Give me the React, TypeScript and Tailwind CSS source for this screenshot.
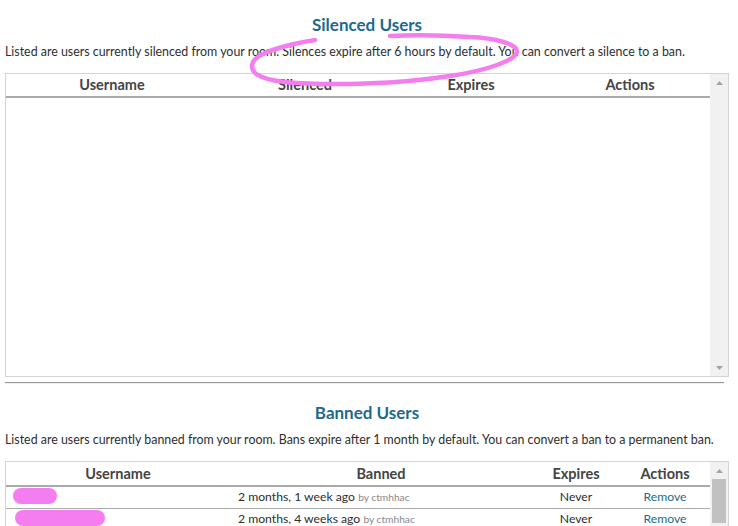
import React from "react";

const font = { fontFamily: 'Lato, "Noto Sans", sans-serif' };

function Scrollbar({ thumb }: { thumb?: boolean }) {
  return (
    <div className="relative flex w-[18px] shrink-0 flex-col bg-[#f1f1f1]">
      <div className="flex h-[17px] shrink-0 items-center justify-center">
        <svg width="7" height="4" viewBox="0 0 7 4"><path d="M0 4 L3.5 0 L7 4Z" fill="#a3a3a3" /></svg>
      </div>
      <div className="flex-1 px-[2px]">
        {thumb && <div className="h-full bg-[#c1c1c1]" />}
      </div>
      <div className="flex h-[17px] shrink-0 items-center justify-center">
        <svg width="7" height="4" viewBox="0 0 7 4"><path d="M0 0 L3.5 4 L7 0Z" fill="#a3a3a3" /></svg>
      </div>
    </div>
  );
}

export default function App() {
  return (
    <div className="relative h-[526px] w-[738px] overflow-hidden bg-white text-[#2e2e2e]" style={font}>
      <div className="pl-[5px] pr-[9px]">
        <h2 className="pt-[13px] text-center text-[17px] font-bold leading-[24px] text-[#1d6a8c]">Silenced Users</h2>
        <p className="mt-[6px] whitespace-nowrap text-[12.4px] leading-[18px]">
          Listed are users currently silenced from your room. Silences expire after 6 hours by default. You can convert a silence to a ban.
        </p>
        <div className="mt-[12px] flex h-[304px] border border-[#d4d4d4]">
          <div className="flex flex-1 flex-col">
            <div className="flex h-[24px] items-center border-b-2 border-[#aaa] text-[14.5px] font-bold text-[#444]">
              <div className="w-[212px] text-center">Username</div>
              <div className="w-[174px] text-center">Silenced</div>
              <div className="w-[158px] text-center">Expires</div>
              <div className="flex-1 text-center">Actions</div>
            </div>
          </div>
          <Scrollbar />
        </div>
        <div className="mt-[5px] mr-[5px] h-[2px] border-t border-[#999] bg-[#eee]" />
        <h2 className="mt-[17px] text-center text-[17px] font-bold leading-[24px] text-[#1d6a8c]">Banned Users</h2>
        <p className="mt-[6px] whitespace-nowrap text-[12.4px] leading-[18px]">
          Listed are users currently banned from your room. Bans expire after 1 month by default. You can convert a ban to a permanent ban.
        </p>
        <div className="mt-[12px] flex h-[80px] border border-[#d4d4d4]">
          <div className="flex flex-1 flex-col">
            <div className="flex h-[25px] shrink-0 items-center border-b-2 border-[#aaa] text-[14.5px] font-bold text-[#444]">
              <div className="w-[224px] text-center">Username</div>
              <div className="w-[302px] text-center">Banned</div>
              <div className="w-[88px] text-center">Expires</div>
              <div className="flex-1 text-center">Actions</div>
            </div>
            {[
              "2 months, 1 week ago",
              "2 months, 4 weeks ago",
            ].map((t, i) => (
              <div key={i} className="flex h-[22px] shrink-0 items-center border-b border-[#aaa] text-[12.2px]">
                <div className="w-[224px]"></div>
                <div className="w-[302px] whitespace-nowrap pl-[8px]">
                  {t} <span className="text-[10.2px] text-[#888]">by ctmhhac</span>
                </div>
                <div className="w-[88px] text-center">Never</div>
                <div className="flex-1 text-center text-[#1d6a8c]">Remove</div>
              </div>
            ))}
          </div>
          <Scrollbar thumb />
        </div>
      </div>

      {/* pink annotation */}
      <svg className="pointer-events-none absolute left-0 top-0" width="738" height="526" viewBox="0 0 738 526">
        <path
          d="M315 40 C290 44 258 52 253 62 C249 72 258 79 285 82 C330 86 400 84 450 76 C490 70 515 60 517 52 C518 44 495 38 470 37 C440 35 410 35 390 36"
          fill="none"
          stroke="#f47ef0"
          strokeWidth="4.5"
          strokeLinecap="round"
        />
        <rect x="13" y="488" width="44" height="16" rx="8" fill="#f47ef0" />
        <rect x="15" y="510" width="90" height="16" rx="8" fill="#f47ef0" />
      </svg>
    </div>
  );
}
